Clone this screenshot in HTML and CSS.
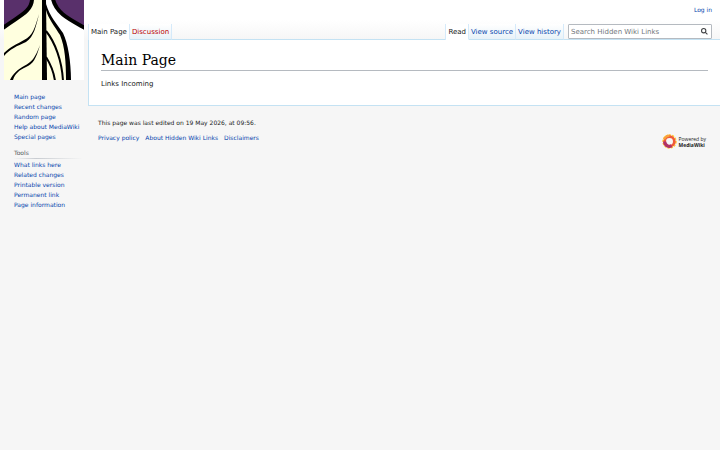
FILE: index.html
```
<!DOCTYPE html>
<html lang="en">
<head>
  <meta charset="UTF-8">
  <meta name="viewport" content="width=device-width, initial-scale=1.0">
  <title>Hidden Wiki Links</title>
  <link rel="stylesheet" href="styles.css">
</head>
<body>
  <div class="page">
    <aside class="sidebar">
      <a class="logo" href="#" aria-label="Visit the main page">
        <svg viewBox="0 0 80 80" width="80" height="80">
          <rect width="80" height="80" fill="#fff"/>
          <path d="M0 0H40V80H0Z" fill="#ffffdf"/>
          <path d="M42 6C45 18 52 25 57 34C63 48 65 64 65 80H42Z" fill="#ffffdf"/>
          <path d="M0 0H28C28 11 15 18 0 27Z" fill="#59306b"/>
          <path d="M50 0H80V28C65 20 53 13 50 0Z" fill="#59306b"/>
          <g fill="none" stroke="#000">
            <path d="M28 -1C28 12 13 17 -1 28" stroke-width="4"/>
            <path d="M49 -1C52 13 65 19 81 28" stroke-width="4"/>
            <path d="M42 31C51 42 58 61 59 81M42 57C47 65 50 73 51 81" stroke-width="2"/>
          </g>
          <path d="M42 4C46 17 53 24 59 33C64 43 67 62 67 80H62C62 62 61 47 56 35C51 27 44 18 42 10Z"/>
          <path d="M35 14C32 26 30 37 22 42C13 46 6 49 0 56V53C6 47 13 44 20 40C29 36 31 27 35 14Z"/>
          <path d="M36 45C32 59 29 64 22 67C15 70 11 74 9 80H6C9 74 13 70 20 66C28 62 31 58 36 45Z"/>
          <path d="M38 0H42L43 80H38Z"/>
        </svg>
      </a>
      <nav class="portal">
        <a href="#">Main page</a>
        <a href="#">Recent changes</a>
        <a href="#">Random page</a>
        <a href="#">Help about MediaWiki</a>
        <a href="#">Special pages</a>
      </nav>
      <nav class="portal" aria-labelledby="tools">
        <h3 id="tools">Tools</h3>
        <a href="#">What links here</a>
        <a href="#">Related changes</a>
        <a href="#">Printable version</a>
        <a href="#">Permanent link</a>
        <a href="#">Page information</a>
      </nav>
    </aside>

    <div class="main">
      <header class="head">
        <div class="personal"><a href="#">Log in</a></div>
        <div class="bar">
          <nav class="tabs">
            <a class="selected" href="#">Main Page</a>
            <a class="new" href="#">Discussion</a>
          </nav>
          <nav class="tabs views">
            <a class="selected" href="#">Read</a>
            <a href="#">View source</a>
            <a href="#">View history</a>
          </nav>
          <form class="search">
            <input type="search" aria-label="Search" placeholder="Search Hidden Wiki Links">
            <button type="button" aria-label="Go">
              <svg viewBox="0 0 13 13" width="7" height="7" fill="none" stroke="#404244" stroke-width="2">
                <circle cx="5" cy="5" r="4"/>
                <path d="M8 8L12 12"/>
              </svg>
            </button>
          </form>
        </div>
      </header>

      <main class="content">
        <h1>Main Page</h1>
        <p>Links Incoming</p>
      </main>

      <footer class="footer">
        <p>This page was last edited on 19 May 2026, at 09:56.</p>
        <div class="places">
          <a href="#">Privacy policy</a>
          <a href="#">About Hidden Wiki Links</a>
          <a href="#">Disclaimers</a>
          <a class="powered" href="#">
            <svg viewBox="0 0 28 28" width="15" height="15" fill="none">
              <circle cx="14" cy="14" r="12" stroke="#fc3" stroke-width="3" stroke-dasharray="4 2"/>
              <circle cx="14" cy="14" r="9" stroke="#f05a38" stroke-width="5"/>
              <path d="M5 14A9 9 0 0 0 18 22" stroke="#b03367" stroke-width="6"/>
              <path d="M4 10A11 11 0 0 1 14 3" stroke="#f9a23b" stroke-width="4"/>
            </svg>
            <span>Powered by<br><b>MediaWiki</b></span>
          </a>
        </div>
      </footer>
    </div>
  </div>
</body>
</html>
```

FILE: styles.css
```
* {
  box-sizing: border-box;
}
body {
  margin: 0;
  background: #f6f6f6;
  color: #202122;
  font-family: "DejaVu Sans", sans-serif;
  font-size: 6px;
}
a {
  color: #0645ad;
  text-decoration: none;
}
a:hover {
  text-decoration: underline;
}
.page {
  display: flex;
  background: linear-gradient(#fff 20px, #f6f6f6 40px) no-repeat;
  background-size: 100% 80px;
}
.sidebar {
  width: 88px;
  flex: none;
  padding-left: 4px;
}
.logo {
  display: block;
  height: 80px;
  margin-bottom: 12px;
}
.logo svg {
  display: block;
}
.portal {
  display: flex;
  flex-direction: column;
  padding-left: 10px;
  margin-bottom: 6px;
  line-height: 10px;
  white-space: nowrap;
}
.portal h3 {
  margin: 0 6px 1px 0;
  font-size: 6px;
  font-weight: normal;
  color: #54595d;
  border-bottom: 1px solid;
  border-image: linear-gradient(to right, #f6f6f6, #c8ccd1 33%, #f6f6f6) 1;
}
.main {
  flex: 1;
  min-width: 0;
}
.head {
  background: linear-gradient(#fff 50%, #f6f6f6);
}
.personal {
  height: 24px;
  padding: 5px 8px 0;
  line-height: 9px;
  text-align: right;
}
.bar {
  display: flex;
  height: 16px;
  padding-right: 8px;
  border-bottom: 1px solid #c4e2f3;
}
.tabs {
  display: flex;
  height: 16px;
  font-size: 7px;
  line-height: 17px;
  border-left: 1px solid #d5eafa;
}
.tabs a {
  padding: 0 2px;
  background: linear-gradient(#fff, #e8f2f8);
  border-right: 1px solid #d5eafa;
  border-bottom: 1px solid #c4e2f3;
}
.tabs .selected {
  color: #202122;
  background: #fff;
  border-bottom-color: #fff;
}
.tabs .new {
  color: #ba0000;
}
.views {
  margin-left: auto;
}
.search {
  display: flex;
  width: 20vw;
  height: 15px;
  margin-left: 4px;
  background: #fff;
  border: 1px solid #b5bac0;
  border-radius: 1px;
}
.search input {
  flex: 1;
  min-width: 0;
  padding: 0 2px;
  border: 0;
  background: none;
  font: 7px "DejaVu Sans", sans-serif;
}
.search input::placeholder {
  color: #72777d;
}
.search button {
  display: flex;
  align-items: center;
  justify-content: center;
  width: 14px;
  padding: 0;
  border: 0;
  background: none;
}
.content {
  padding: 11px 12px 15px;
  background: #fff;
  border: 1px solid #c4e2f3;
  border-width: 0 0 1px 1px;
}
.content h1 {
  margin: 0 0 8px;
  padding-bottom: 1px;
  font: 14px/18px "DejaVu Serif", serif;
  color: #000;
  border-bottom: 1px solid #b5bac0;
}
.content p {
  margin: 0;
  font-size: 7px;
  line-height: 11px;
}
.footer {
  padding: 12px 10px;
}
.footer p {
  margin: 0 0 6px;
  line-height: 10px;
}
.places {
  display: flex;
  align-items: flex-start;
  gap: 6px;
}
.powered {
  display: flex;
  align-items: center;
  gap: 2px;
  margin: 0 4px 0 auto;
  color: #202122;
  font: 5px/6px "Open Sans", sans-serif;
}
```
